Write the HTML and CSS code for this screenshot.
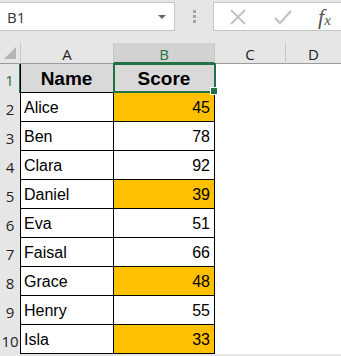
FILE: index.html
```
<!DOCTYPE html>
<html lang="en">
  <head>
    <meta charset="UTF-8" />
    <title>Scores</title>
    <link rel="stylesheet" href="styles.css">
  </head>
  <body>
    <div class="topbar">
      <div class="namebox">
        <span class="ref">B1</span>
        <span class="caret"></span>
      </div>
      <div class="dots"><i></i><i></i><i></i></div>
      <div class="formula">
        <svg class="ico" width="20" height="20" viewBox="0 0 20 20">
          <path d="M3 3 L17 17 M17 3 L3 17" stroke="#c4c4c4" stroke-width="2" fill="none" />
        </svg>
        <svg class="ico" width="22" height="20" viewBox="0 0 22 20">
          <path d="M3 11 L8 16 L19 4" stroke="#c4c4c4" stroke-width="2.4" fill="none" />
        </svg>
        <span class="fx">f<sub>x</sub></span>
      </div>
    </div>

    <div class="sheet">
      <div class="corner"><span></span></div>
      <div class="colhead">A</div>
      <div class="colhead sel">B</div>
      <div class="colhead">C</div>
      <div class="colhead last">D</div>

      <div class="rowhead sel">1</div>
      <div class="cell title">Name</div>
      <div class="cell title active">Score<span class="handle"></span></div>
      <div class="blank"></div>
      <div class="blank"></div>

      <div class="rowhead">2</div>
      <div class="cell">Alice</div>
      <div class="cell num low">45</div>
      <div class="blank"></div>
      <div class="blank"></div>

      <div class="rowhead">3</div>
      <div class="cell">Ben</div>
      <div class="cell num">78</div>
      <div class="blank"></div>
      <div class="blank"></div>

      <div class="rowhead">4</div>
      <div class="cell">Clara</div>
      <div class="cell num">92</div>
      <div class="blank"></div>
      <div class="blank"></div>

      <div class="rowhead">5</div>
      <div class="cell">Daniel</div>
      <div class="cell num low">39</div>
      <div class="blank"></div>
      <div class="blank"></div>

      <div class="rowhead">6</div>
      <div class="cell">Eva</div>
      <div class="cell num">51</div>
      <div class="blank"></div>
      <div class="blank"></div>

      <div class="rowhead">7</div>
      <div class="cell">Faisal</div>
      <div class="cell num">66</div>
      <div class="blank"></div>
      <div class="blank"></div>

      <div class="rowhead">8</div>
      <div class="cell">Grace</div>
      <div class="cell num low">48</div>
      <div class="blank"></div>
      <div class="blank"></div>

      <div class="rowhead">9</div>
      <div class="cell">Henry</div>
      <div class="cell num">55</div>
      <div class="blank"></div>
      <div class="blank"></div>

      <div class="rowhead">10</div>
      <div class="cell">Isla</div>
      <div class="cell num low">33</div>
      <div class="blank"></div>
      <div class="blank"></div>
    </div>
  </body>
</html>
```

FILE: styles.css
```
body {
  margin: 0;
  width: 341px;
  height: 356px;
  overflow: hidden;
  background: #e6e6e6;
  font-family: "Liberation Sans", Arial, sans-serif;
}
.topbar {
  display: flex;
  align-items: stretch;
  height: 29px;
  padding-top: 2px;
  margin-bottom: 12px;
}
.namebox {
  width: 175px;
  box-sizing: border-box;
  background: #fff;
  border: 1px solid #c6c6c6;
  border-left: none;
  display: flex;
  align-items: center;
  justify-content: space-between;
  padding: 0 8px 0 7px;
}
.ref {
  font-family: "Open Sans", sans-serif;
  font-size: 15px;
  color: #333;
}
.caret {
  width: 0;
  height: 0;
  border-left: 4px solid transparent;
  border-right: 4px solid transparent;
  border-top: 4px solid #666;
}
.dots {
  width: 38px;
  display: flex;
  flex-direction: column;
  align-items: center;
  justify-content: center;
  gap: 2px;
}
.dots i {
  display: block;
  width: 3px;
  height: 3px;
  background: #a6a6a6;
}
.formula {
  flex: 1;
  background: #fff;
  border: 1px solid #c6c6c6;
  border-right: none;
  display: flex;
  align-items: center;
  padding-left: 14px;
  gap: 24px;
}
.fx {
  font-family: "Liberation Serif", serif;
  font-style: italic;
  font-size: 22px;
  color: #555;
  margin-left: 0;
  line-height: 1;
}
.fx sub {
  font-size: 15px;
  vertical-align: -1px;
}
.sheet {
  display: grid;
  grid-template-columns: 21px 93px 101px 71px 1fr;
  grid-template-rows: 21px repeat(10, 29px);
}
.corner {
  border-right: 1px solid #c6c6c6;
  border-bottom: 1px solid #9b9b9b;
  position: relative;
}
.corner span {
  position: absolute;
  right: 4px;
  bottom: 4px;
  width: 0;
  height: 0;
  border-left: 12px solid transparent;
  border-bottom: 12px solid #b4b4b4;
}
.colhead {
  display: flex;
  align-items: center;
  justify-content: center;
  font-family: "Open Sans", sans-serif;
  font-size: 15px;
  color: #222;
  border-right: 1px solid #c6c6c6;
  border-bottom: 1px solid #9b9b9b;
  padding-top: 2px;
}
.colhead.sel {
  background: #d2d2d2;
  color: #217346;
  border-bottom: 2px solid #217346;
}
.colhead.last {
  border-right: none;
}
.rowhead {
  display: flex;
  align-items: flex-end;
  justify-content: center;
  padding-bottom: 3px;
  font-family: "Open Sans", sans-serif;
  font-size: 15px;
  color: #222;
  box-sizing: border-box;
  border-right: 1px solid #c6c6c6;
}
.rowhead.sel {
  color: #217346;
  border-right: 2px solid #217346;
}
.cell {
  background: #fff;
  border-right: 1px solid #000;
  border-bottom: 1px solid #000;
  display: flex;
  align-items: center;
  padding: 2px 4px 0 3px;
  font-size: 16px;
  color: #000;
  min-width: 0;
}
.cell:nth-child(5n + 2) {
  border-left: 1px solid #000;
  margin-left: -1px;
}
.cell.title {
  background: #d9d9d9;
  font-weight: bold;
  font-size: 19px;
  justify-content: center;
}
.cell.num {
  justify-content: flex-end;
}
.cell.low {
  background: #ffc000;
}
.cell.active {
  position: relative;
  border: 2px solid #217346;
  margin: -1px -1px 0 -1px;
}
.handle {
  position: absolute;
  right: -4px;
  bottom: -4px;
  width: 6px;
  height: 6px;
  background: #217346;
  border: 1px solid #fff;
}
.blank {
  background: #fff;
}
```
